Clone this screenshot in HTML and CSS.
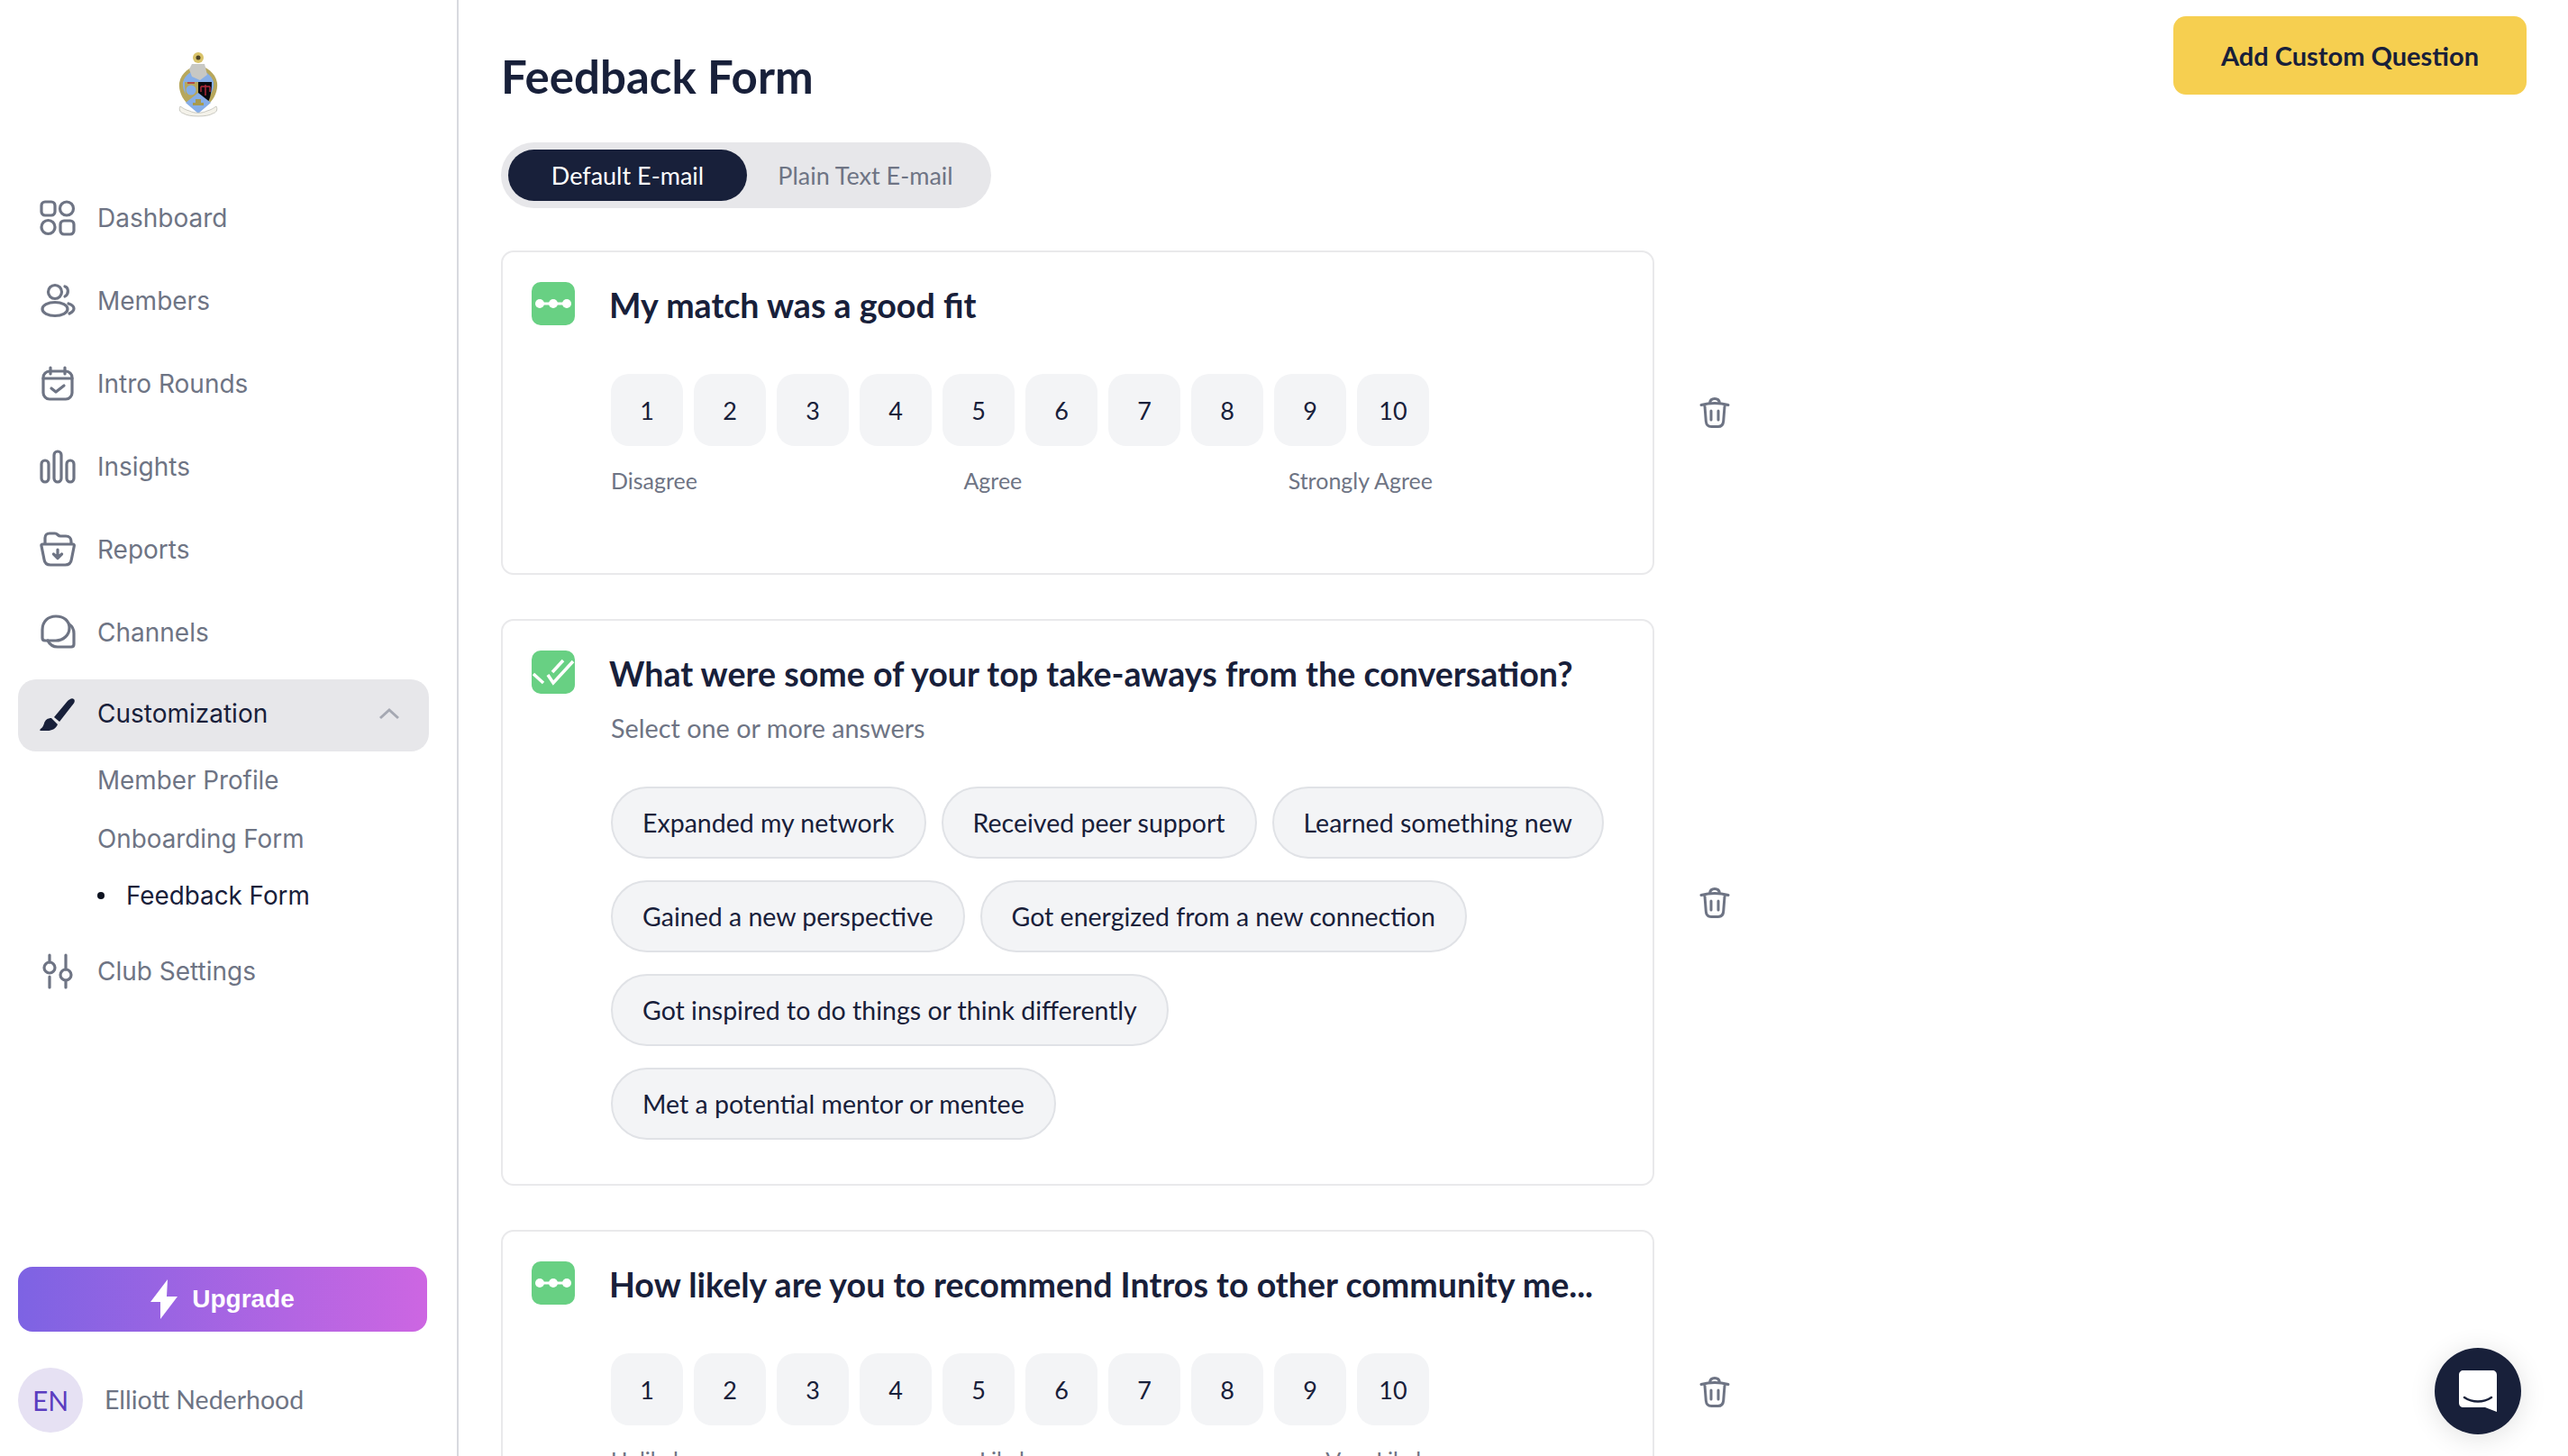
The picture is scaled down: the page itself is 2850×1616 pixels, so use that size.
FILE: index.html
```html
<!DOCTYPE html>
<html lang="en">
<head>
<meta charset="utf-8">
<title>Feedback Form</title>
<link rel="stylesheet" href="styles.css">
</head>
<body>
<svg class="defs" width="0" height="0" aria-hidden="true">
  <defs>
    <symbol id="trash" viewBox="0 0 36 36"><path d="M3 9.500c9.500-2.600 20.500-2.600 30 0M12.500 7.500c.3-3 2-5 5.500-5s5.200 2 5.500 5M7 11l1.300 16.500c.3 3.500 2.500 6 6 6h7.400c3.500 0 5.700-2.500 6-6L29 11M14 16v10M22 16v10"/></symbol>
    <symbol id="scale" viewBox="0 0 48 48"><rect width="48" height="48" rx="10" fill="#68d083"/><path d="M8 24h32" stroke="#fff" stroke-width="3"/><circle cx="9" cy="24" r="5" fill="#fff"/><circle cx="24" cy="24" r="5" fill="#fff"/><circle cx="39" cy="24" r="5" fill="#fff"/></symbol>
    <symbol id="multi" viewBox="0 0 48 48"><rect width="48" height="48" rx="10" fill="#68d083"/><path d="M2 26l11 10M18 27l6 9L46 12M23 24L35 11" stroke="#fff" stroke-width="3.500" fill="none"/></symbol>
  </defs>
</svg>
<div class="app">
  <aside class="sidebar">
    <div class="logo">
      <svg class="crest" viewBox="0 0 44 74">
        <circle cx="22" cy="6" r="6" fill="#d9c36a"/><circle cx="22" cy="6" r="2.500" fill="#4b4326"/>
        <path d="M22 14c-8 2-19 8-21 20-1 8 3 18 10 24h22c7-6 11-16 10-24C41 22 30 16 22 14z" fill="#b7a75c"/>
        <path d="M22 18c-6 2-15 7-17 15-1 6 2 14 8 20h18c6-6 9-14 8-20-2-8-11-13-17-15z" fill="#86aee8"/>
        <path d="M15 13h14l3 12-8 6-9-4-3-8z" fill="#c8c8c4"/>
        <path d="M7 33h15v27H15C9 55 7 45 7 33z" fill="#b7a75c"/>
        <path d="M22 33h15c0 12-2 22-8 27h-7z" fill="#0b0b0f"/>
        <circle cx="14" cy="42" r="5.500" fill="#86aee8"/>
        <path d="M10 34h8M30 36v12M25 38h10M25 38v6M35 38v6" stroke="#b32a3c" stroke-width="1.400" fill="none"/>
        <path d="M22 45l14 11-14 12L8 56z" fill="#86aee8"/>
        <path d="M16 56h12v3H16zM19 52h6v4h-6z" fill="#a89a4e"/>
        <path d="M2 60c3 2 6 4 10 5 6 3 14 3 20 0 4-1 7-3 10-5 2 4 0 7-4 8-5 4-27 4-32 0-4-1-6-4-4-8z" fill="#f4f2ea" stroke="#bdbcb4" stroke-width=".8"/>
      </svg>
    </div>
    <nav class="nav">
      <a class="nav-item">
        <svg class="nav-icon" viewBox="0 0 40 40"><rect x="2" y="2" width="15" height="15" rx="4"/><circle cx="30" cy="9.500" r="7.500"/><circle cx="9.500" cy="30" r="7.500"/><rect x="23" y="23" width="15" height="15" rx="4"/></svg>
        <span>Dashboard</span>
      </a>
      <a class="nav-item">
        <svg class="nav-icon" viewBox="0 0 40 40"><circle cx="17" cy="10" r="7.500"/><ellipse cx="17" cy="29" rx="14" ry="7.500"/><path d="M28 4c4 1 5 8 0 11M32 23c3 1 6 3 6 5.500s-2 4-5 5.500"/></svg>
        <span>Members</span>
      </a>
      <a class="nav-item">
        <svg class="nav-icon" viewBox="0 0 40 40"><rect x="4" y="6" width="32" height="31" rx="7"/><path d="M12 2v7M28 2v7M4 14h32M13 25l5 4 9-7"/></svg>
        <span>Intro Rounds</span>
      </a>
      <a class="nav-item">
        <svg class="nav-icon" viewBox="0 0 40 40"><rect x="2" y="13" width="8" height="24" rx="4"/><rect x="16" y="3" width="8" height="34" rx="4"/><rect x="30" y="13" width="8" height="24" rx="4"/></svg>
        <span>Insights</span>
      </a>
      <a class="nav-item">
        <svg class="nav-icon" viewBox="0 0 40 40"><path d="M3 14h34c1 0 1.500 1 1.300 2l-3 15c-.6 4-3 6-7 6H12c-4 0-6.400-2-7-6L2 16c-.2-1 0-2 1-2zM6 14V7c0-3 2-5 5-5h6c3 0 3 3 6 3h6c4 0 6 3 6 6v3M20 20v9M15.500 25l4.500 4.500 4.500-4.500"/></svg>
        <span>Reports</span>
      </a>
      <a class="nav-item">
        <svg class="nav-icon" viewBox="0 0 40 40"><path d="M18 2c9 0 15 5 15 13 0 8-7 14-15 14H6c-2 0-3-1-3-3v-9C3 8 9 2 18 2z"/><path d="M33 11c3 2 5 6 5 10v12c0 2-1 3-3 3H20c-5 0-9-3-11-7"/></svg>
        <span>Channels</span>
      </a>
      <a class="nav-item nav-active">
        <svg class="nav-icon brush" viewBox="0 0 40 40"><path d="M16 24L31 6c2-2 5-4 7-2s0 5-2 7L22 29zM13 25l7 7c-2 5-7 7-11 7H1c-1 0-1-1 0-2 3-2 3-4 4-6 1-4 4-6 8-6z"/></svg>
        <span>Customization</span>
        <svg class="chevron" viewBox="0 0 24 14"><path d="M2 12L12 3l10 9"/></svg>
      </a>
      <a class="sub-item">Member Profile</a>
      <a class="sub-item">Onboarding Form</a>
      <a class="sub-item sub-active"><i class="dot"></i>Feedback Form</a>
      <a class="nav-item nav-last">
        <svg class="nav-icon" viewBox="0 0 40 40"><circle cx="11" cy="16" r="6"/><circle cx="29" cy="24" r="6"/><path d="M11 2v8M11 26v12M29 2v16M29 30v8"/></svg>
        <span>Club Settings</span>
      </a>
    </nav>
    <div class="side-foot">
      <a class="upgrade">
        <svg class="bolt" viewBox="0 0 30 44"><path d="M19 0L0 25h11L11 44 30 19H18z"/></svg>
        <span>Upgrade</span>
      </a>
      <div class="user">
        <span class="avatar">EN</span>
        <span class="user-name">Elliott Nederhood</span>
      </div>
    </div>
  </aside>

  <main class="main">
    <header class="top">
      <h1 class="page-title">Feedback Form</h1>
      <button class="add-btn">Add Custom Question</button>
    </header>
    <div class="toggle">
      <span class="tab tab-on">Default E-mail</span>
      <span class="tab">Plain Text E-mail</span>
    </div>

    <section class="row">
      <div class="card card-short">
        <svg class="q-icon"><use href="#scale"/></svg>
        <div class="q-body">
          <h2 class="q-title">My match was a good fit</h2>
          <div class="scale">
            <span class="num">1</span><span class="num">2</span><span class="num">3</span><span class="num">4</span><span class="num">5</span><span class="num">6</span><span class="num">7</span><span class="num">8</span><span class="num">9</span><span class="num">10</span>
          </div>
          <div class="scale-labels"><span>Disagree</span><span>Agree</span><span>Strongly Agree</span></div>
        </div>
      </div>
      <svg class="trash"><use href="#trash"/></svg>
    </section>

    <section class="row">
      <div class="card">
        <svg class="q-icon"><use href="#multi"/></svg>
        <div class="q-body">
          <h2 class="q-title">What were some of your top take-aways from the conversation?</h2>
          <p class="q-sub">Select one or more answers</p>
          <div class="pills">
            <span class="pill">Expanded my network</span>
            <span class="pill">Received peer support</span>
            <span class="pill">Learned something new</span>
            <span class="pill">Gained a new perspective</span>
            <span class="pill">Got energized from a new connection</span>
            <span class="pill">Got inspired to do things or think differently</span>
            <span class="pill">Met a potential mentor or mentee</span>
          </div>
        </div>
      </div>
      <svg class="trash"><use href="#trash"/></svg>
    </section>

    <section class="row">
      <div class="card card-short">
        <svg class="q-icon"><use href="#scale"/></svg>
        <div class="q-body">
          <h2 class="q-title">How likely are you to recommend Intros to other community me...</h2>
          <div class="scale">
            <span class="num">1</span><span class="num">2</span><span class="num">3</span><span class="num">4</span><span class="num">5</span><span class="num">6</span><span class="num">7</span><span class="num">8</span><span class="num">9</span><span class="num">10</span>
          </div>
          <div class="scale-labels"><span>Unlikely</span><span>Likely</span><span>Very Likely</span></div>
        </div>
      </div>
      <svg class="trash"><use href="#trash"/></svg>
    </section>
  </main>
</div>
<div class="chat">
  <svg class="chat-icon" viewBox="0 0 42 46"><path d="M5 0h32c3 0 5 2 5 5v41l-13-5H5c-3 0-5-2-5-5V5c0-3 2-5 5-5z" fill="#fff"/><path d="M6 30c9 6 21 6 30 0" stroke="#18203a" stroke-width="2.500" fill="none" stroke-linecap="round"/></svg>
</div>
</body>
</html>
```

FILE: styles.css
```css
* { box-sizing: border-box; }
html, body { margin: 0; height: 100%; overflow: hidden; background: #fff; }
body { font-family: "Lato", "Liberation Sans", sans-serif; color: #18203a; }
.defs { position: absolute; }
.app { display: flex; height: 1616px; overflow: hidden; }

.sidebar { width: 509px; flex: none; border-right: 2px solid #d8dadf; display: flex; flex-direction: column; padding: 0 31px 26px 20px; font-family: "Inter", sans-serif; }
.logo { height: 196px; display: flex; justify-content: center; align-items: flex-start; padding: 58px 0 0 0; margin-right: 56px; }
.crest { width: 44px; height: 74px; }
.nav { display: flex; flex-direction: column; }
.nav-item { height: 92px; display: flex; align-items: center; padding-left: 24px; gap: 24px; font-size: 28px; color: #6e7484; }
.nav-icon { width: 40px; height: 40px; flex: none; fill: none; stroke: #6e7484; stroke-width: 3.200; stroke-linejoin: round; stroke-linecap: round; }
.nav-active { height: 80px; margin-top: 6px; padding-bottom: 4px; background: #e7e7ea; border-radius: 20px; color: #18203a; padding-right: 32px; }
.nav-active span { flex: 1; }
.brush { fill: #18203a; stroke: none; }
.chevron { width: 24px; height: 14px; fill: none; stroke: #a5a8b2; stroke-width: 3; }
.nav-last { margin-top: 5px; }
.sub-item { height: 64.500px; display: flex; align-items: center; padding-left: 88px; font-size: 27.800px; color: #6e7484; }
.sub-active { color: #18203a; margin-top: -1px; }
.dot { width: 8px; height: 8px; border-radius: 50%; background: #0d1220; margin-right: 24px; }
.side-foot { margin-top: auto; display: flex; flex-direction: column; gap: 40px; }
.upgrade { height: 72px; width: 454px; border-radius: 16px; background: linear-gradient(90deg, #7d63e3, #cd66e2); display: flex; align-items: center; justify-content: center; gap: 16px; color: #fff; font: 700 28px "Liberation Sans", sans-serif; }
.bolt { width: 30px; height: 44px; fill: #fff; }
.user { display: flex; align-items: center; gap: 24px; }
.avatar { width: 72px; height: 72px; border-radius: 50%; background: #e6e1f3; color: #5b3dc0; display: flex; align-items: center; justify-content: center; font: 400 30px "Lato", sans-serif; }
.user-name { font: 400 28.500px "Lato", sans-serif; color: #6e7484; padding-bottom: 2px; }

.main { flex: 1; min-width: 0; padding: 18px 46px 0 47px; overflow: hidden; }
.top { display: flex; justify-content: space-between; align-items: flex-start; height: 140px; }
.page-title { margin: 40px 0 0; font-size: 51px; font-weight: 700; line-height: 54px; }
.add-btn { width: 392px; height: 87px; border: 0; border-radius: 14px; background: #f6cf50; color: #18203a; font: 700 29px "Lato", sans-serif; }
.toggle { display: inline-flex; width: 544px; height: 73px; padding: 8px; border-radius: 37px; background: #e7e7ea; font-size: 27px; margin-bottom: 47px; color: #6e7484; }
.tab { display: flex; align-items: center; justify-content: center; flex: 1; border-radius: 29px; }
.tab-on { flex: none; width: 265px; background: #18203a; color: #fff; }

.row { display: flex; align-items: center; gap: 49px; margin-bottom: 49px; }
.card { width: 1280px; flex: none; border: 2px solid #e9e9eb; border-radius: 14px; padding: 33px 32px 49px 32px; display: flex; gap: 40px; }
.card-short { min-height: 360px; }
.q-icon { width: 48px; height: 48px; flex: none; }
.q-body { flex: 1; min-width: 0; }
.q-title { margin: 0 0 0 -2px; font-size: 37.600px; font-weight: 700; line-height: 51px; white-space: nowrap; }
.q-sub { margin: 15px 0 0; font-size: 28.800px; line-height: 40px; color: #6e7484; }
.scale { display: flex; gap: 12px; margin-top: 51px; }
.num { width: 80px; height: 80px; border-radius: 20px; background: #f3f4f6; display: flex; align-items: center; justify-content: center; font-size: 27px; }
.scale-labels { display: flex; justify-content: space-between; width: 912px; margin-top: 23px; font-size: 25px; line-height: 30px; color: #6e7484; }
.pills { display: flex; flex-wrap: wrap; gap: 24px 17px; margin-top: 45px; }
.pill { height: 80px; padding: 0 33px; display: flex; align-items: center; border: 2px solid #e0e2e6; border-radius: 40px; background: #f3f4f6; font-size: 28.500px; }
.trash { width: 36px; height: 36px; flex: none; fill: none; stroke: #6e7484; stroke-width: 3; stroke-linecap: round; stroke-linejoin: round; }

.chat { position: fixed; left: 2702px; top: 1496px; width: 96px; height: 96px; border-radius: 50%; background: #18203a; box-shadow: 0 4px 30px rgba(0,0,0,.12); display: flex; align-items: center; justify-content: center; }
.chat-icon { width: 42px; height: 46px; }
```
